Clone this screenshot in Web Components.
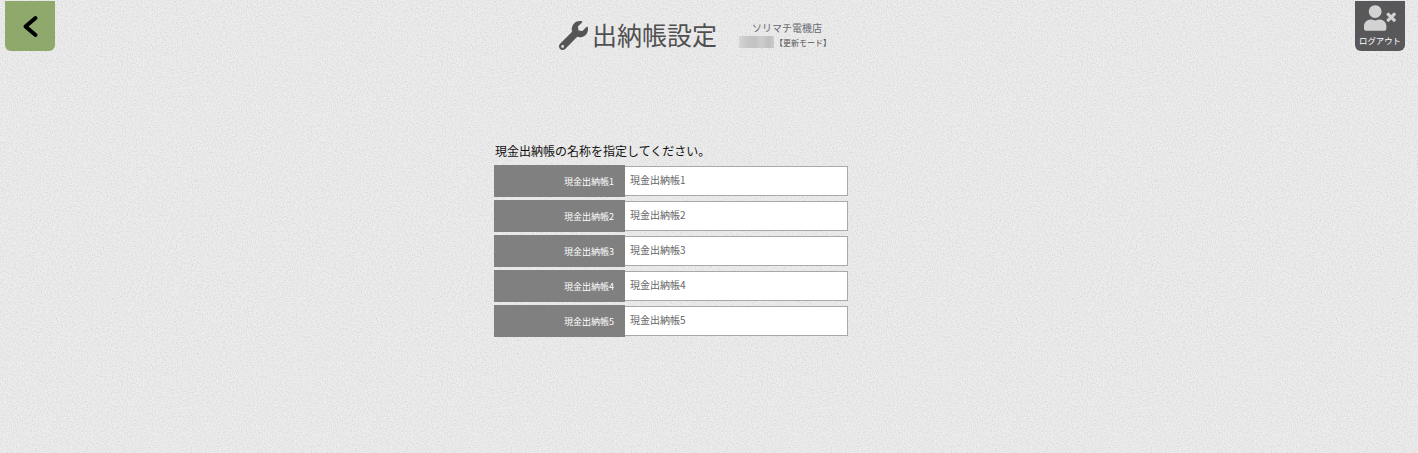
<!DOCTYPE html>
<html lang="ja">
<head>
<meta charset="utf-8">
<title>出納帳設定</title>
<style>
html,body{margin:0;padding:0;height:100%;}
body{background:#e7e7e7;font-family:"Noto Sans CJK JP","Liberation Sans",sans-serif;overflow:hidden;}
</style>
</head>
<body>
<app-page>
  <app-header slot="header"></app-header>
  <ledger-form>
    <ledger-row label="現金出納帳1" value="現金出納帳1"></ledger-row>
    <ledger-row label="現金出納帳2" value="現金出納帳2"></ledger-row>
    <ledger-row label="現金出納帳3" value="現金出納帳3"></ledger-row>
    <ledger-row label="現金出納帳4" value="現金出納帳4"></ledger-row>
    <ledger-row label="現金出納帳5" value="現金出納帳5"></ledger-row>
  </ledger-form>
</app-page>
<script>
function def(name, html, init){
  customElements.define(name, class extends HTMLElement{
    constructor(){super();this.attachShadow({mode:'open'}).innerHTML=html;}
    connectedCallback(){ if(init) init(this); }
  });
}
def('app-page', `<style>
:host{display:block;position:relative;width:1418px;height:453px;overflow:hidden;isolation:isolate;}
svg.tex{position:absolute;inset:0;z-index:-1;}
.wrap{display:flex;flex-direction:column;}
</style>
<svg class="tex" width="1418" height="453" aria-hidden="true">
<filter id="n" x="0" y="0" width="100%" height="100%" color-interpolation-filters="sRGB">
<feTurbulence type="fractalNoise" baseFrequency="0.8" numOctaves="2" seed="4"/>
<feColorMatrix type="matrix" values="0 0 0 0 0  0 0 0 0 0  0 0 0 0 0  1.6 0 0 0 -0.62"/>
<feComponentTransfer><feFuncA type="linear" slope="0.12"/></feComponentTransfer>
</filter>
<rect width="1418" height="453" fill="#ededed"/>
<rect width="1418" height="453" filter="url(#n)"/>
</svg>
<div class="wrap"><slot name="header"></slot><slot></slot></div>`);

def('app-header', `<style>
:host{display:flex;align-items:flex-start;height:51px;font-family:"Noto Sans CJK JP","Liberation Sans",sans-serif;}
.back{box-sizing:border-box;width:50px;height:50px;margin:1px 0 0 5px;background:#8fa96c;border-radius:0 0 6px 6px;display:flex;}
.center{margin-left:503px;display:flex;align-items:flex-start;padding-top:18px;}
h1{margin:0;font-size:25px;line-height:32px;font-weight:400;color:#505050;margin-left:5px;white-space:nowrap;}
.wrench{display:block;width:29px;height:29px;margin-top:3px;margin-left:1px;margin-right:-1px;}
.shop{margin-left:22px;margin-top:3px;display:flex;flex-direction:column;color:#666a70;}
.name{font-size:10px;line-height:13px;margin-left:13px;white-space:nowrap;}
.mode{display:flex;align-items:center;font-size:8px;line-height:11px;color:#555;margin-top:2px;white-space:nowrap;}
.blur{width:35px;height:12px;background:linear-gradient(90deg,#d6d6d6,#c8c8c8 20%,#c2c2c2 45%,#cecece 65%,#bfbfbf 85%,#cccccc);margin-right:1px;}
.logout{box-sizing:border-box;width:50px;height:50px;margin:1px 13px 0 auto;background:#58585a;border-radius:0 0 6px 6px;color:#fff;display:flex;flex-direction:column;align-items:center;}
.logout svg{display:block;width:32px;height:26px;margin-top:4px;}
.logout span{font-size:8.4px;line-height:10px;margin-top:4px;white-space:nowrap;}
</style>
<div class="back"><svg width="50" height="50" viewBox="0 0 50 50"><polyline points="30.5,17 20.5,25.5 30.5,34" fill="none" stroke="#000" stroke-width="4" stroke-linecap="round" stroke-linejoin="round"/></svg></div>
<div class="center">
<svg class="wrench" viewBox="0 0 512 512"><path fill="#555" d="M507.73 109.1c-2.24-9.03-13.54-12.09-20.12-5.51l-74.36 74.36-67.88-11.31-11.31-67.88 74.36-74.36c6.62-6.62 3.43-17.9-5.66-20.16-47.38-11.74-99.55.91-136.58 37.93-39.64 39.64-50.55 97.1-34.05 147.2L18.74 402.76c-24.99 24.99-24.99 65.51 0 90.5 24.99 24.99 65.51 24.99 90.5 0l213.21-213.21c50.12 16.71 107.47 5.68 147.37-34.22 37.07-37.07 49.7-89.32 37.91-136.73zM64 472c-13.25 0-24-10.75-24-24 0-13.26 10.75-24 24-24s24 10.74 24 24c0 13.25-10.75 24-24 24z"/></svg>
<h1>出納帳設定</h1>
<div class="shop"><div class="name">ソリマチ電機店</div><div class="mode"><div class="blur"></div><span>【更新モード】</span></div></div>
</div>
<div class="logout"><svg viewBox="0 0 640 512"><path fill="#d2d2d2" d="M589.6 240l45.6-45.6c6.3-6.3 6.3-16.5 0-22.8l-22.8-22.8c-6.3-6.3-16.5-6.3-22.8 0L544 194.4l-45.6-45.6c-6.3-6.3-16.5-6.3-22.8 0l-22.8 22.8c-6.3 6.3-6.3 16.5 0 22.8l45.6 45.6-45.6 45.6c-6.3 6.3-6.3 16.5 0 22.8l22.8 22.8c6.3 6.3 16.5 6.3 22.8 0l45.6-45.6 45.6 45.6c6.3 6.3 16.5 6.3 22.8 0l22.8-22.8c6.3-6.3 6.3-16.5 0-22.8L589.6 240zM224 256c70.7 0 128-57.3 128-128S294.7 0 224 0 96 57.3 96 128s57.3 128 128 128zm89.6 32h-16.7c-22.2 10.2-46.9 16-72.9 16s-50.6-5.8-72.9-16h-16.7C60.2 288 0 348.2 0 422.4V464c0 26.5 21.5 48 48 48h352c26.5 0 48-21.5 48-48v-41.6c0-74.2-60.2-134.4-134.4-134.4z"/></svg><span>ログアウト</span></div>`);

def('ledger-form', `<style>
:host{display:flex;flex-direction:column;align-items:flex-start;margin:91px 0 0 494px;width:354px;font-family:"Noto Sans CJK JP","Liberation Sans",sans-serif;}
p{margin:0 0 6px 1px;font-size:12px;line-height:17px;color:#111;white-space:nowrap;height:17px;}
.rows{display:flex;flex-direction:column;gap:3px;}
</style><p>現金出納帳の名称を指定してください。</p><div class="rows"><slot></slot></div>`);

def('ledger-row', `<style>
:host{display:flex;width:354px;height:32px;}
label{box-sizing:border-box;width:131px;height:32px;background:#808080;color:#fff;font-size:9px;line-height:34px;text-align:right;padding-right:11px;white-space:nowrap;}
input{box-sizing:border-box;width:223px;height:30px;margin:1px 0 0 0;border:1px solid #a9a9a9;border-left:0;background:#fff;color:#666;font:10px/14px "Noto Sans CJK JP","Liberation Sans",sans-serif;padding:0 0 4px 5px;outline:0;}
</style><label></label><input type="text">`, el=>{
  el.shadowRoot.querySelector('label').textContent=el.getAttribute('label');
  el.shadowRoot.querySelector('input').value=el.getAttribute('value');
  el.shadowRoot.querySelector('input').setAttribute('value',el.getAttribute('value'));
});
</script>
</body>
</html>
